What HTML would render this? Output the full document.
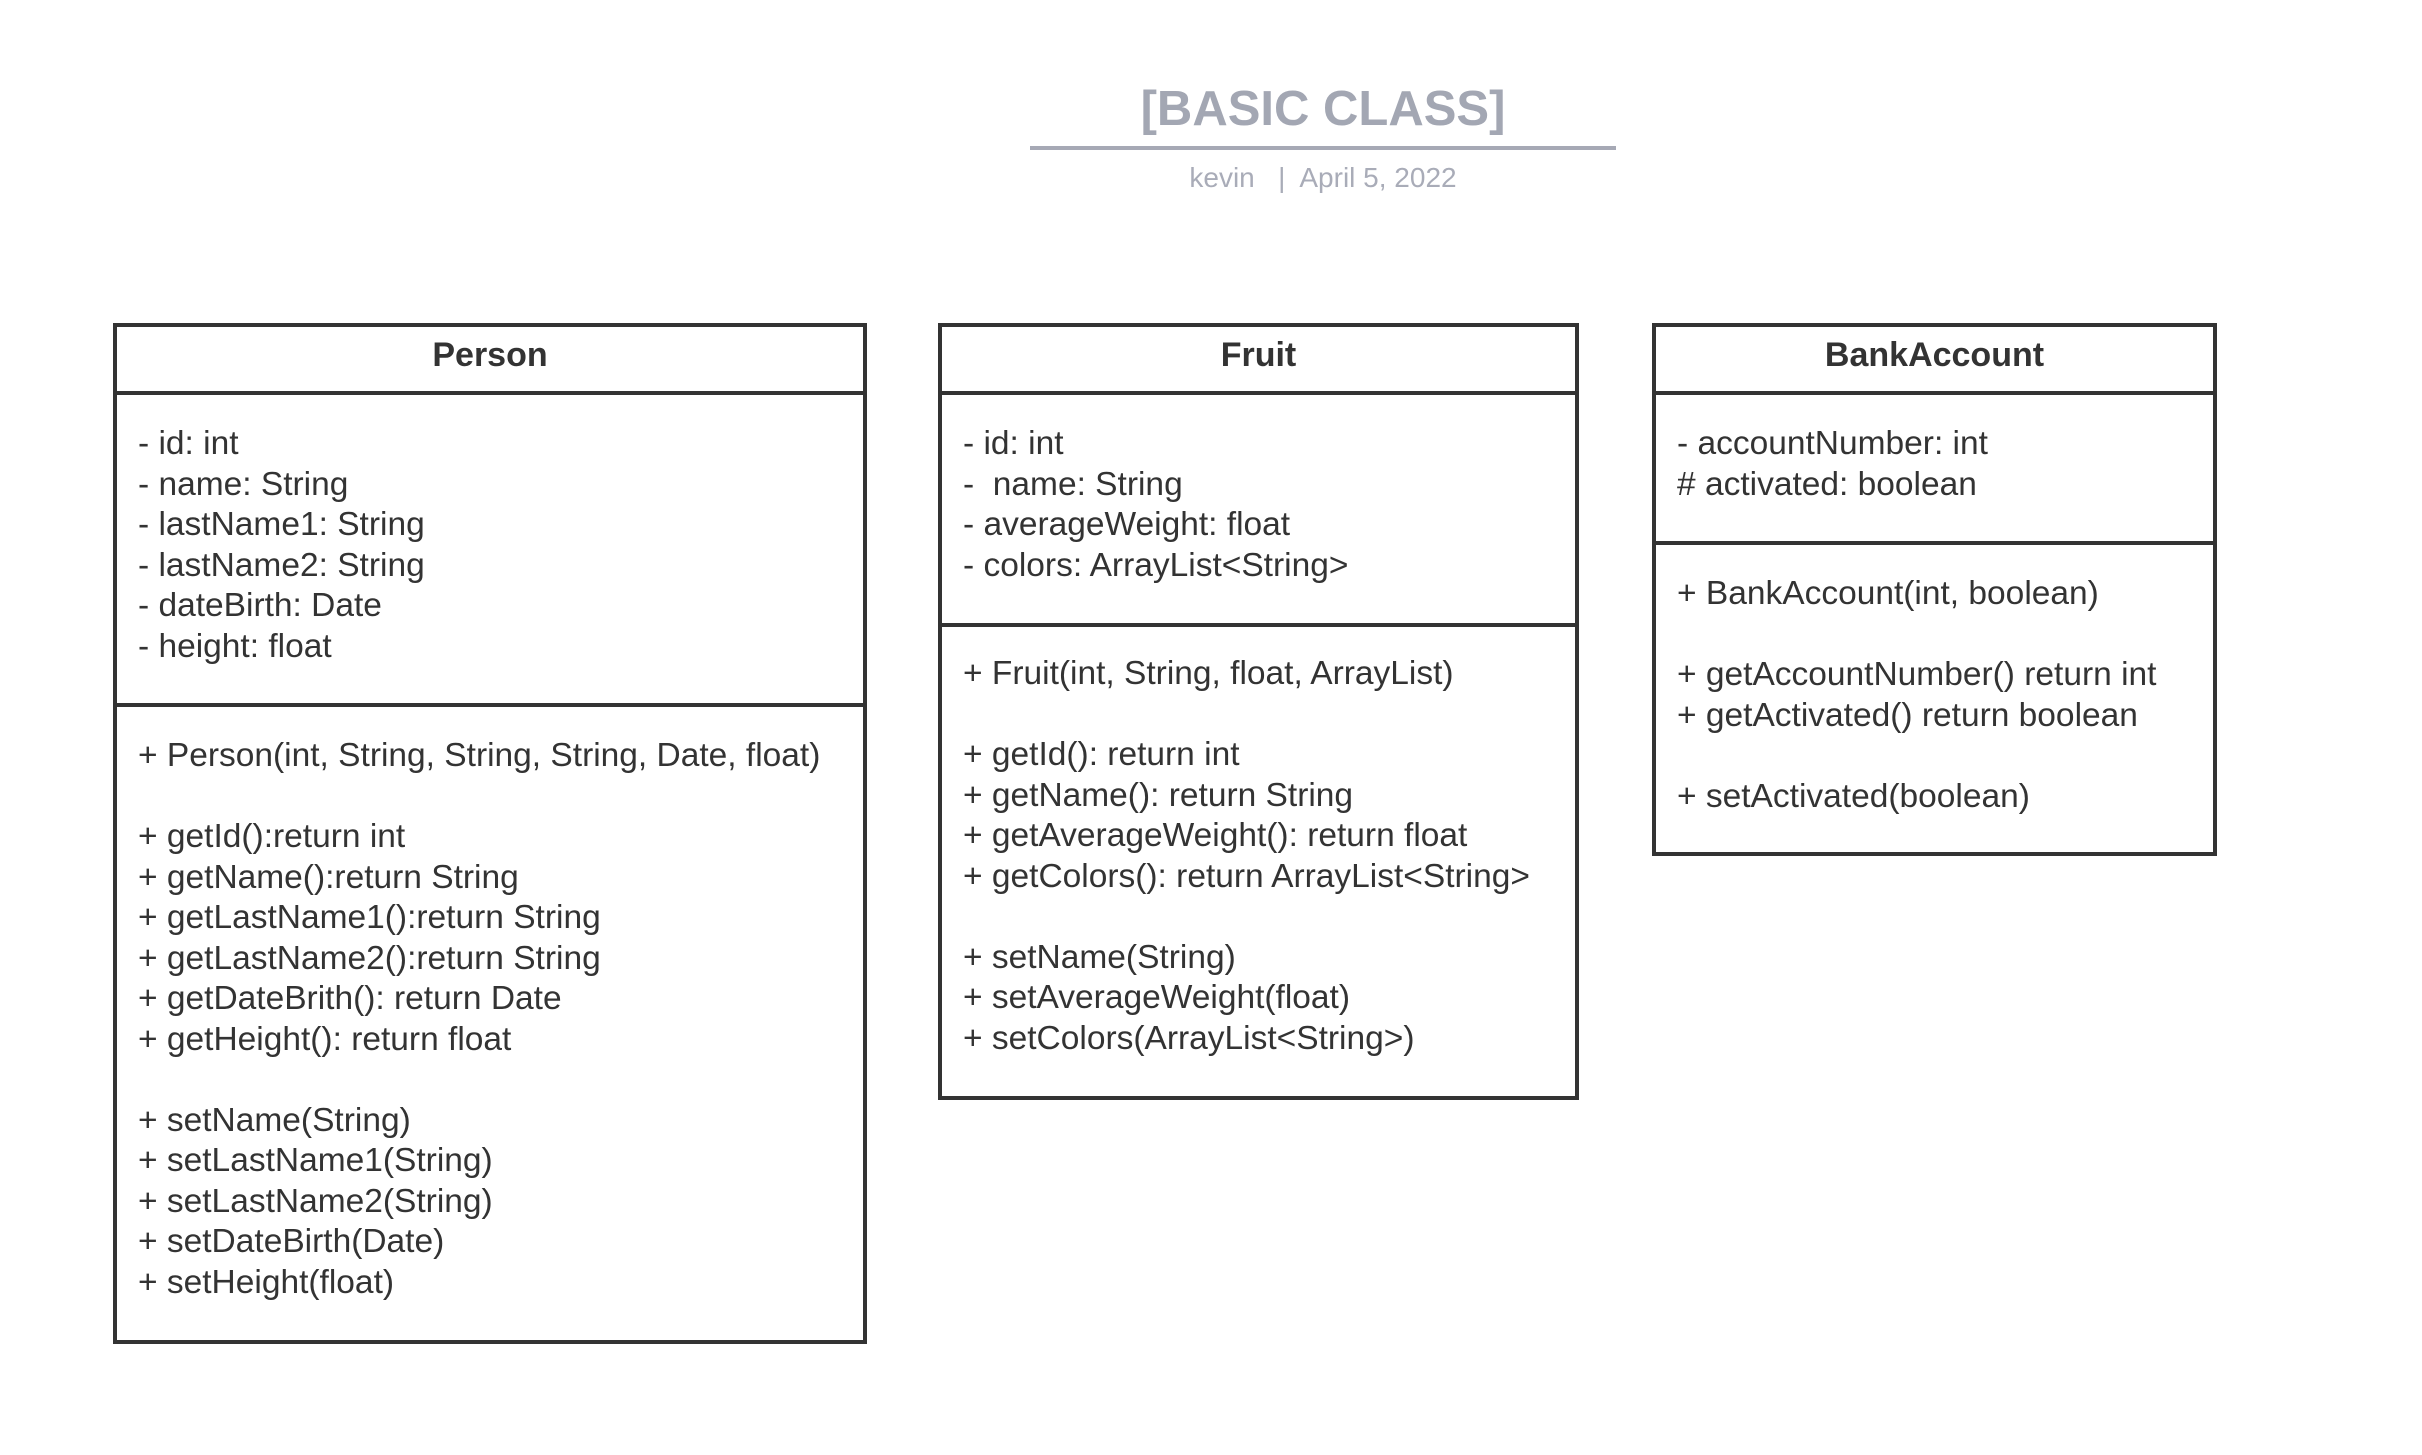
<!DOCTYPE html>
<html><head><meta charset="utf-8"><style>
body{margin:0;width:2422px;height:1455px;background:#fff;position:relative;overflow:hidden;font-family:"Liberation Sans",Arial,sans-serif;color:#333}
.box{position:absolute;border:4px solid #333;box-sizing:border-box}
.hr{position:absolute;left:0;right:0;height:4px;background:#333}
.h{position:absolute;left:0;right:0;top:0;height:56px;line-height:56px;text-align:center;font-weight:bold;font-size:34px;color:#333}
.txt{position:absolute;left:21px;font-size:33.5px;line-height:40.5px;white-space:pre;color:#333}
</style></head><body>
<div style="position:absolute;left:1030px;width:586px;top:80px;text-align:center;font-weight:bold;font-size:49px;color:#a3a7b3;line-height:58px">[BASIC CLASS]</div>
<div style="position:absolute;left:1030px;width:586px;top:146px;height:4px;background:#a6a9b5"></div>
<div style="position:absolute;left:1030px;width:586px;top:160px;text-align:center;font-size:28px;color:#a9acb8;line-height:35px;white-space:pre">kevin   |  April 5, 2022</div>

<div class="box" style="left:113px;top:323px;width:754px;height:1021px">
<div class="h">Person</div>
<div class="hr" style="top:64px"></div>
<div class="txt" style="top:97px">- id: int
- name: String
- lastName1: String
- lastName2: String
- dateBirth: Date
- height: float</div>
<div class="hr" style="top:376px"></div>
<div class="txt" style="top:409px">+ Person(int, String, String, String, Date, float)

+ getId():return int
+ getName():return String
+ getLastName1():return String
+ getLastName2():return String
+ getDateBrith(): return Date
+ getHeight(): return float

+ setName(String)
+ setLastName1(String)
+ setLastName2(String)
+ setDateBirth(Date)
+ setHeight(float)</div>
</div>

<div class="box" style="left:938px;top:323px;width:641px;height:777px">
<div class="h">Fruit</div>
<div class="hr" style="top:64px"></div>
<div class="txt" style="top:97px">- id: int
-  name: String
- averageWeight: float
- colors: ArrayList&lt;String&gt;</div>
<div class="hr" style="top:296px"></div>
<div class="txt" style="top:327px">+ Fruit(int, String, float, ArrayList)

+ getId(): return int
+ getName(): return String
+ getAverageWeight(): return float
+ getColors(): return ArrayList&lt;String&gt;

+ setName(String)
+ setAverageWeight(float)
+ setColors(ArrayList&lt;String&gt;)</div>
</div>

<div class="box" style="left:1652px;top:323px;width:565px;height:533px">
<div class="h">BankAccount</div>
<div class="hr" style="top:64px"></div>
<div class="txt" style="top:97px">- accountNumber: int
# activated: boolean</div>
<div class="hr" style="top:214px"></div>
<div class="txt" style="top:247px">+ BankAccount(int, boolean)

+ getAccountNumber() return int
+ getActivated() return boolean

+ setActivated(boolean)</div>
</div>
</body></html>
